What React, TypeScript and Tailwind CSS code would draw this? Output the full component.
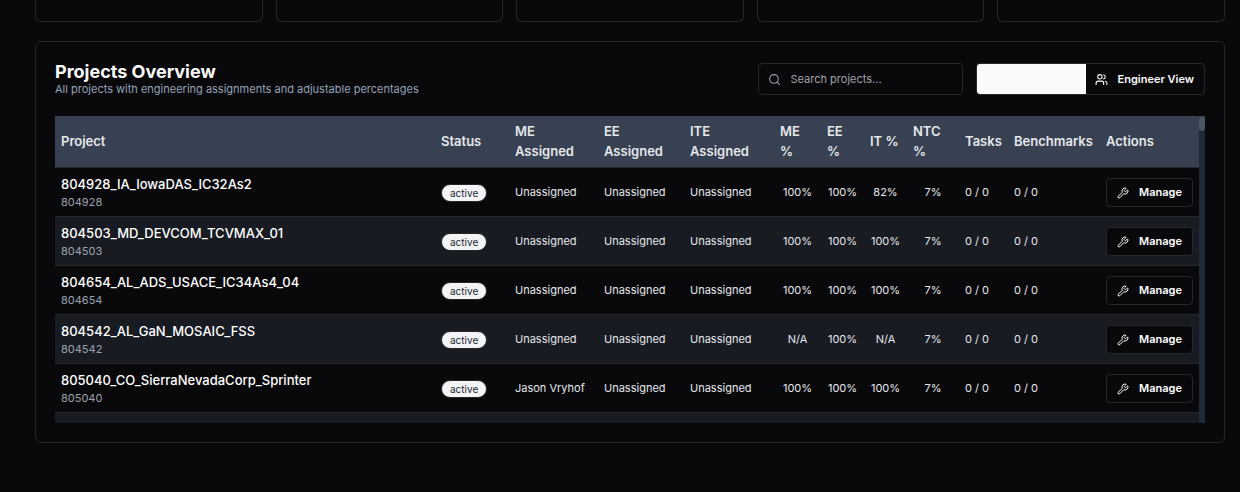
import { Search, Users, Wrench } from "lucide-react";

type Project = {
  name: string;
  code: string;
  me: string;
  ee: string;
  ite: string;
  mePct: string;
  eePct: string;
  itPct: string;
  ntcPct: string;
};

const U = "Unassigned";

const projects: Project[] = [
  { name: "804928_IA_IowaDAS_IC32As2", code: "804928", me: U, ee: U, ite: U, mePct: "100%", eePct: "100%", itPct: "82%", ntcPct: "7%" },
  { name: "804503_MD_DEVCOM_TCVMAX_01", code: "804503", me: U, ee: U, ite: U, mePct: "100%", eePct: "100%", itPct: "100%", ntcPct: "7%" },
  { name: "804654_AL_ADS_USACE_IC34As4_04", code: "804654", me: U, ee: U, ite: U, mePct: "100%", eePct: "100%", itPct: "100%", ntcPct: "7%" },
  { name: "804542_AL_GaN_MOSAIC_FSS", code: "804542", me: U, ee: U, ite: U, mePct: "N/A", eePct: "100%", itPct: "N/A", ntcPct: "7%" },
  { name: "805040_CO_SierraNevadaCorp_Sprinter", code: "805040", me: "Jason Vryhof", ee: U, ite: U, mePct: "100%", eePct: "100%", itPct: "100%", ntcPct: "7%" },
];

const columns = [
  { label: "Project", width: "" },
  { label: "Status", width: "w-[74px]" },
  { label: "ME Assigned", width: "w-[89px]" },
  { label: "EE Assigned", width: "w-[86px]" },
  { label: "ITE Assigned", width: "w-[90px]" },
  { label: "ME %", width: "w-[47px]" },
  { label: "EE %", width: "w-[43px]" },
  { label: "IT %", width: "w-[43px]" },
  { label: "NTC %", width: "w-[52px]" },
  { label: "Tasks", width: "w-[49px]" },
  { label: "Benchmarks", width: "w-[92px]" },
  { label: "Actions", width: "w-[99px]" },
];

function ProjectRow({ project }: { project: Project }) {
  return (
    <tr className="h-[49px] border-b border-[#27272a] even:bg-[#181b22]">
      <td className="px-1.5">
        <div className="text-[13px] leading-5 font-medium text-white">{project.name}</div>
        <div className="text-[11px] leading-4 text-[#9ca3af]">{project.code}</div>
      </td>
      <td className="px-1.5 pt-0.5">
        <span className="inline-flex rounded-full border border-[#27272a] bg-[#f3f4f6] px-2 text-[10px] leading-4 text-[#1f2937]">
          active
        </span>
      </td>
      <td className="px-1.5 pt-0.5">{project.me}</td>
      <td className="px-1.5 pt-0.5">{project.ee}</td>
      <td className="px-1.5 pt-0.5">{project.ite}</td>
      <td className="pt-0.5 text-center">{project.mePct}</td>
      <td className="pt-0.5 text-center">{project.eePct}</td>
      <td className="pt-0.5 text-center">{project.itPct}</td>
      <td className="pt-0.5 text-center">{project.ntcPct}</td>
      <td className="px-1.5 pt-0.5">0 / 0</td>
      <td className="px-1.5 pt-0.5">0 / 0</td>
      <td className="px-1.5 pt-0.5">
        <button
          type="button"
          className="flex h-[29px] w-full items-center justify-between rounded border border-[#27272a] bg-[#09090b] px-2.5 text-[11px] font-semibold text-white"
        >
          <Wrench className="size-3" />
          Manage
        </button>
      </td>
    </tr>
  );
}

export default function App() {
  return (
    <main className="min-h-screen bg-[#09090b] pr-[15px] pl-[35px] font-['Inter',sans-serif] text-[#fafafa]">
      <div className="grid grid-cols-5 gap-[13px]">
        {[0, 1, 2, 3, 4].map((card) => (
          <div key={card} className="h-[22px] rounded-b-md border border-t-0 border-[#27272a]" />
        ))}
      </div>

      <section className="mt-[19px] rounded-md border border-[#27272a] p-[19px]">
        <header className="mb-[19px] flex items-center justify-between">
          <div>
            <h2 className="text-[18px] leading-[21px] font-bold">Projects Overview</h2>
            <p className="text-[11px] leading-[15px] text-[#94a3b8]">
              All projects with engineering assignments and adjustable percentages
            </p>
          </div>
          <div className="flex items-center gap-[13px]">
            <label className="flex h-8 w-[205px] items-center gap-2.5 rounded border border-[#27272a] px-[9px]">
              <Search className="size-[13px] shrink-0 text-[#9ca3af]" />
              <input
                type="search"
                aria-label="Search projects"
                placeholder="Search projects..."
                className="w-full min-w-0 bg-transparent text-[11px] outline-none placeholder:text-[#a1a1aa]"
              />
            </label>
            <div className="flex h-8 overflow-hidden rounded border border-[#27272a]">
              <button type="button" aria-label="Project View" aria-pressed="true" className="w-[109px] bg-[#fafafa]" />
              <button type="button" className="flex items-center gap-2.5 pr-2.5 pl-[9px] text-[11px] font-semibold">
                <Users className="size-[13px]" />
                Engineer View
              </button>
            </div>
          </div>
        </header>

        <div className="flex h-[307px]">
          <div className="min-w-0 flex-1 overflow-y-auto [scrollbar-width:none]">
            <table className="w-full table-fixed border-collapse text-left text-[11px] text-[#e5e7eb]">
              <thead className="bg-[#374151]">
                <tr className="h-[51px] border-b border-[#27272a]">
                  {columns.map((column) => (
                    <th key={column.label} className={`${column.width} px-1.5 text-[13px] leading-5 font-semibold`}>
                      {column.label}
                    </th>
                  ))}
                </tr>
              </thead>
              <tbody>
                {projects.map((project) => (
                  <ProjectRow key={project.code} project={project} />
                ))}
                <tr className="h-[11px] bg-[#181b22]">
                  <td colSpan={12} />
                </tr>
              </tbody>
            </table>
          </div>
          <div className="w-1.5 shrink-0 bg-[#1f2937]">
            <div className="h-[15px] rounded-full bg-[#4b5563]" />
          </div>
        </div>
      </section>
    </main>
  );
}
